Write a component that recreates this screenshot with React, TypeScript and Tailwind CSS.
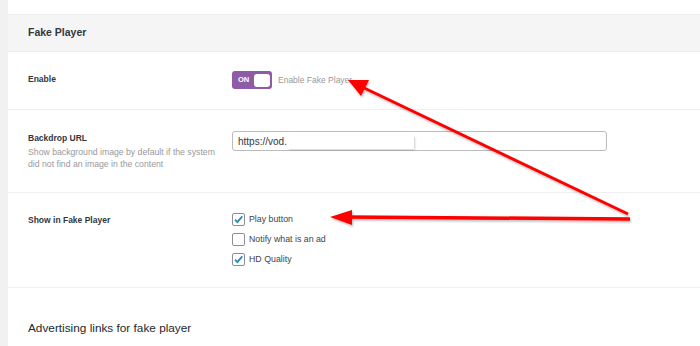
import React from 'react'

const sans = { fontFamily: '"Liberation Sans", Arial, sans-serif' }

function Check({ checked, label }: { checked: boolean; label: string }) {
    return (
        <div className="flex items-center h-[13px] gap-[4px]">
            <div className="w-[13px] h-[13px] rounded-[2px] border border-[#8c8f94] bg-white flex items-center justify-center">
                {checked && (
                    <svg width="11" height="11" viewBox="0 0 10 10">
                        <path d="M1.8 5.2 L4 7.4 L8.4 2.2" fill="none" stroke="#1e8cbe" strokeWidth="1.6" />
                    </svg>
                )}
            </div>
            <span className="text-[8.8px] text-[#444]">{label}</span>
        </div>
    )
}

export default function App() {
    return (
        <div className="relative w-[700px] h-[346px] overflow-hidden flex bg-[#f1f1f1]" style={sans}>
            <div className="w-[8px] shrink-0" />
            <div className="flex-1 bg-white flex flex-col">
                <div className="h-[15px] border-b border-[#ececec] shrink-0" />
                <div className="h-[37px] bg-[#f5f5f5] border-b border-[#ececec] px-[20px] flex items-center shrink-0">
                    <h2 className="text-[10.5px] font-bold text-[#32373c]">Fake Player</h2>
                </div>

                <div className="h-[58px] border-b border-[#efefef] flex px-[20px] pt-[19px] shrink-0">
                    <div className="w-[204px] text-[8.5px] font-bold text-[#32373c] pt-[2px]">Enable</div>
                    <div className="flex items-center gap-[6px] h-[18px]">
                        <div className="w-[40px] h-[18px] rounded-[3px] bg-[#8f5aa6] flex items-center justify-between pl-[6px] pr-[2px]">
                            <span className="text-[7.5px] font-bold text-white">ON</span>
                            <div className="w-[16px] h-[13px] rounded-[3px] bg-white" />
                        </div>
                        <span className="text-[8.5px] text-[#999]">Enable Fake Player</span>
                    </div>
                </div>

                <div className="h-[83px] border-b border-[#efefef] flex px-[20px] pt-[22px] shrink-0">
                    <div className="w-[204px]">
                        <div className="text-[8.5px] font-bold text-[#32373c] leading-[12px]">Backdrop URL</div>
                        <p className="text-[8.7px] text-[#999] leading-[11.5px] mt-[3px]">
                            Show background image by default if the system
                            <br />
                            did not find an image in the content
                        </p>
                    </div>
                    <div className="w-[375px] h-[20px] -mt-[1px] rounded-[3px] border border-[#bbb] flex items-center pl-[5px]">
                        <span className="text-[10px] text-[#32373c]">https://vod.</span>
                        <div className="w-[126px] h-[13px] bg-white shadow-[1px_1px_2px_rgba(0,0,0,0.2)] ml-[1px] mt-[2px]" />
                    </div>
                </div>

                <div className="h-[95px] border-b border-[#efefef] flex px-[20px] pt-[20px] shrink-0">
                    <div className="w-[204px] text-[8.5px] font-bold text-[#32373c] leading-[12px] pt-[1px]">
                        Show in Fake Player
                    </div>
                    <div className="flex flex-col gap-[7px]">
                        <Check checked label="Play button" />
                        <Check checked={false} label="Notify what is an ad" />
                        <Check checked label="HD Quality" />
                    </div>
                </div>

                <div className="px-[20px] pt-[32px]">
                    <h2 className="text-[11.8px] text-[#23282d]">Advertising links for fake player</h2>
                </div>
            </div>

            <svg className="absolute inset-0 pointer-events-none" width="700" height="346" viewBox="0 0 700 346">
                <defs>
                    <filter id="sh" x="-10%" y="-10%" width="120%" height="120%">
                        <feDropShadow dx="1" dy="1.5" stdDeviation="1" floodColor="#000" floodOpacity="0.3" />
                    </filter>
                </defs>
                <g filter="url(#sh)" fill="#ff0000" stroke="#ff0000">
                    <line x1="628" y1="214" x2="360" y2="86" strokeWidth="3" />
                    <polygon points="348,80 369,80 361,96" stroke="none" />
                    <line x1="630" y1="219" x2="346" y2="217" strokeWidth="3.5" />
                    <polygon points="330,217 352,210 352,225" stroke="none" />
                </g>
            </svg>
        </div>
    )
}
